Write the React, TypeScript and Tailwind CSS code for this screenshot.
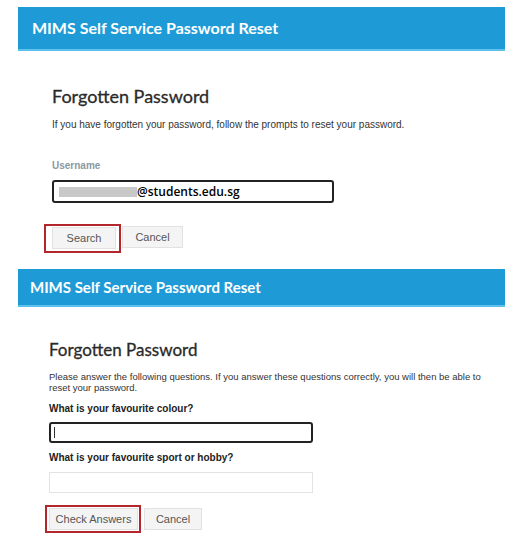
import React from 'react'

const sans = { fontFamily: '"Liberation Sans", Arial, sans-serif' }

function Header({ big }: { big?: boolean }) {
    return (
        <div className={`mx-[18px] flex items-center bg-[#1e9bd7] border-b-2 border-[#5cc1ec] ${big ? 'h-[44px] pl-[14px]' : 'h-[38px] pl-[12px]'}`}>
            <span className={`font-bold text-white font-['Lato',sans-serif] ${big ? 'text-[16px]' : 'text-[15px]'}`}>
                MIMS Self Service Password Reset
            </span>
        </div>
    )
}

function Btn({ label, w }: { label: string; w: string }) {
    return (
        <div className={`flex h-[22px] items-center justify-center border border-[#e2e2e2] bg-[#f4f4f4] text-[11px] text-[#555] ${w}`} style={sans}>
            {label}
        </div>
    )
}

export default function App() {
    return (
        <div className='w-[523px] h-[540px] overflow-hidden bg-white pt-[7px]'>
            {/* first screen */}
            <Header big />
            <div className='pl-[52px]'>
                <h1 className="mt-[33px] text-[18px] leading-[24px] text-[#2a2a2a] font-['Lato',sans-serif] [-webkit-text-stroke:0.3px]">Forgotten Password</h1>
                <p className='mt-[11px] text-[10px] leading-[12px] text-[#333]' style={sans}>
                    If you have forgotten your password, follow the prompts to reset your password.
                </p>
                <p className='mt-[29px] text-[10px] leading-[12px] font-bold text-[#8a99a3]' style={sans}>Username</p>
                <div className='mt-[8px] flex h-[23px] w-[282px] items-center rounded-[3px] border-2 border-[#222] pl-[5px]'>
                    <span className='h-[10px] w-[78px] bg-[#c8c8c8]' />
                    <span className="text-[12px] font-semibold text-black font-['Open_Sans',sans-serif]">@students.edu.sg</span>
                </div>
                <div className='mt-[21px] ml-[-8px] flex items-start'>
                    <div className='border-2 border-[#b3262c] pt-[1px] pb-[2px] pl-[6px] pr-[3px]'>
                        <Btn label='Search' w='w-[64px]' />
                    </div>
                    <div className='mt-[2px] ml-[1px]'>
                        <Btn label='Cancel' w='w-[61px]' />
                    </div>
                </div>
            </div>

            {/* second screen */}
            <div className='mt-[16px]'>
                <Header />
            </div>
            <div className='pl-[49px]'>
                <h1 className="mt-[32px] text-[17px] leading-[22px] text-[#2a2a2a] font-['Lato',sans-serif] [-webkit-text-stroke:0.3px]">Forgotten Password</h1>
                <p className='mt-[10px] text-[9.5px] leading-[11px] text-[#333]' style={sans}>
                    Please answer the following questions. If you answer these questions correctly, you will then be able to
                    <br />
                    reset your password.
                </p>
                <p className='mt-[10px] text-[10px] leading-[12px] font-bold text-[#222]' style={sans}>What is your favourite colour?</p>
                <div className='mt-[7px] flex h-[21px] w-[264px] items-center rounded-[3px] border-2 border-[#222] pl-[3px]'>
                    <span className='h-[11px] w-px bg-[#333]' />
                </div>
                <p className='mt-[9px] text-[10px] leading-[12px] font-bold text-[#222]' style={sans}>What is your favourite sport or hobby?</p>
                <div className='mt-[8px] h-[21px] w-[264px] border border-[#e3e3e3]' />
                <div className='mt-[12px] ml-[-4px] flex items-start'>
                    <div className='border-2 border-[#b3262c] pt-[1px] pb-[1px] pl-[2px] pr-[1px]'>
                        <Btn label='Check Answers' w='w-[89px]' />
                    </div>
                    <div className='mt-[3px] ml-[3px]'>
                        <Btn label='Cancel' w='w-[58px]' />
                    </div>
                </div>
            </div>
        </div>
    )
}
